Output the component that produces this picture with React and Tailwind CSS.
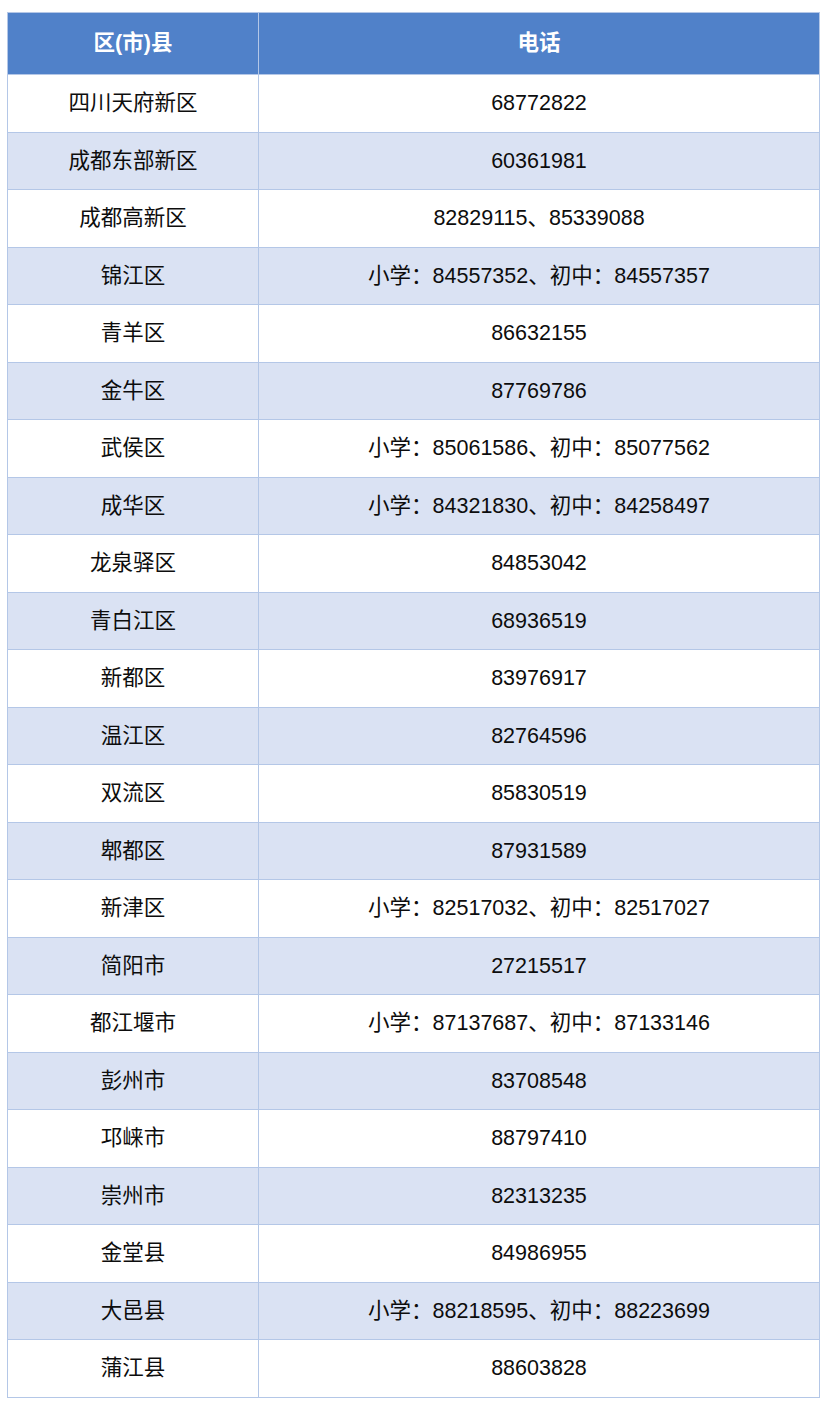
import React from 'react';

const rows = [
  ['四川天府新区', '68772822'],
  ['成都东部新区', '60361981'],
  ['成都高新区', '82829115、85339088'],
  ['锦江区', '小学：84557352、初中：84557357'],
  ['青羊区', '86632155'],
  ['金牛区', '87769786'],
  ['武侯区', '小学：85061586、初中：85077562'],
  ['成华区', '小学：84321830、初中：84258497'],
  ['龙泉驿区', '84853042'],
  ['青白江区', '68936519'],
  ['新都区', '83976917'],
  ['温江区', '82764596'],
  ['双流区', '85830519'],
  ['郫都区', '87931589'],
  ['新津区', '小学：82517032、初中：82517027'],
  ['简阳市', '27215517'],
  ['都江堰市', '小学：87137687、初中：87133146'],
  ['彭州市', '83708548'],
  ['邛崃市', '88797410'],
  ['崇州市', '82313235'],
  ['金堂县', '84986955'],
  ['大邑县', '小学：88218595、初中：88223699'],
  ['蒲江县', '88603828'],
];

export default function App() {
  return (
    <div className="bg-white min-h-[1411px] pt-[12px] pl-[7px]">
      <table
        className="w-[813px] border-collapse text-[21.5px] text-[#0d0d0d] text-center"
        style={{ fontFamily: '"Liberation Sans", "Noto Sans CJK SC", sans-serif' }}
      >
        <thead>
          <tr className="bg-[#5081c9] text-white font-bold h-[62px]">
            <th className="w-[251px] border border-[#b4c7e7] font-bold">区(市)县</th>
            <th className="border border-[#b4c7e7] font-bold">电话</th>
          </tr>
        </thead>
        <tbody>
          {rows.map(([area, phone], i) => (
            <tr key={area} className={`h-[57.5px] ${i % 2 === 1 ? 'bg-[#dae2f3]' : 'bg-white'}`}>
              <td className="border border-[#b4c7e7]">{area}</td>
              <td className="border border-[#b4c7e7]">{phone}</td>
            </tr>
          ))}
        </tbody>
      </table>
    </div>
  );
}
